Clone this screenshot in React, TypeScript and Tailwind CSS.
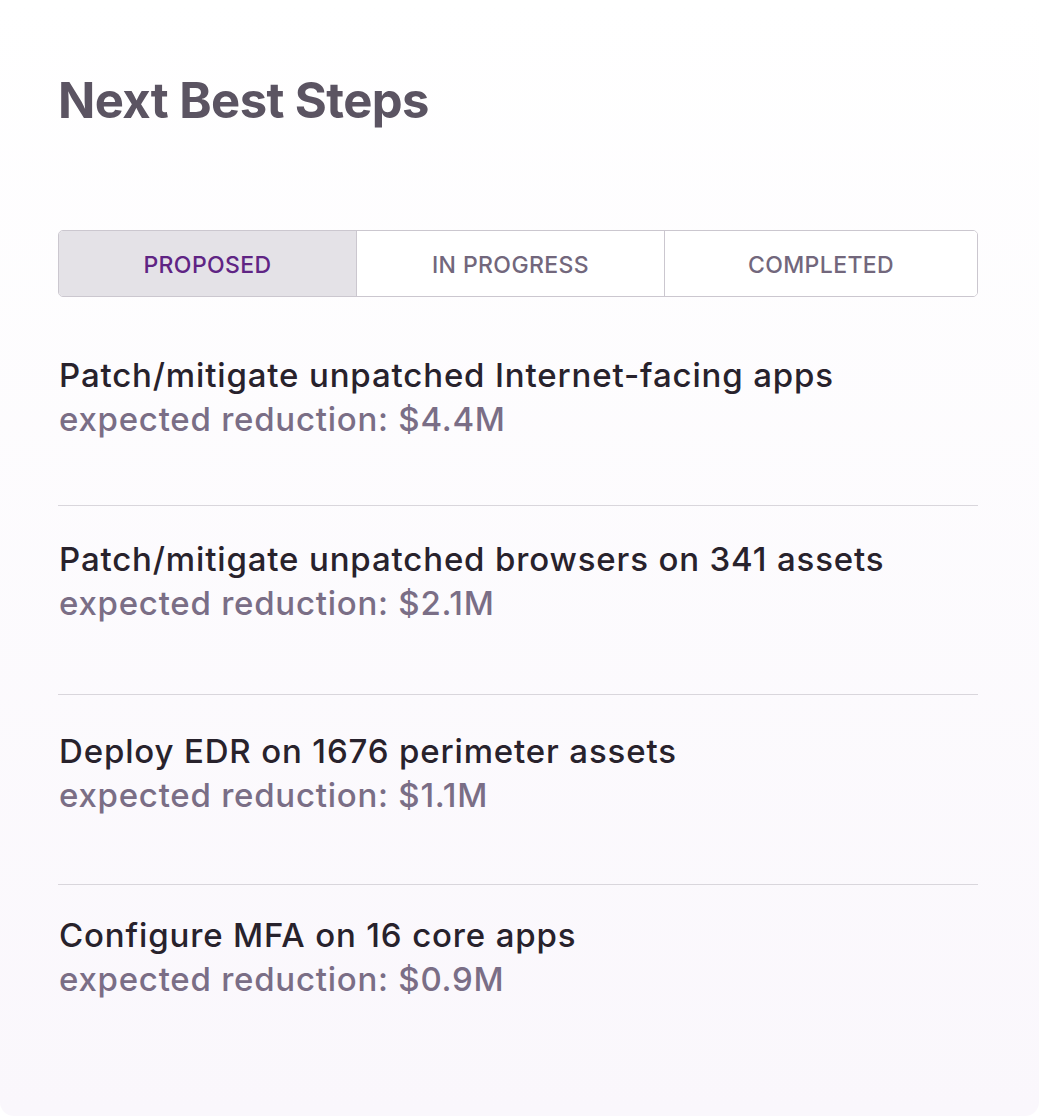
import React from "react";

const items = [
  { title: "Patch/mitigate unpatched Internet-facing apps", value: "$4.4M", cls: "pb-[64px] border-b border-[#d9d6dc]" },
  { title: "Patch/mitigate unpatched browsers on 341 assets", value: "$2.1M", cls: "pt-[31px] pb-[69px] border-b border-[#d9d6dc]" },
  { title: "Deploy EDR on 1676 perimeter assets", value: "$1.1M", cls: "pt-[34px] pb-[67px] border-b border-[#d9d6dc]" },
  { title: "Configure MFA on 16 core apps", value: "$0.9M", cls: "pt-[28px]" },
];

export default function App() {
  return (
    <div
      className="w-[1039px] h-[1118px] bg-white"
      style={{ fontFamily: "Inter, 'Noto Sans', sans-serif" }}
    >
      <div className="h-[1116px] rounded-b-[14px] bg-gradient-to-b from-[#ffffff] to-[#faf7fc] px-[58px] pt-[71px]">
        <h1 className="text-[49px] leading-[59px] font-bold text-[#5b5462] tracking-[-0.6px]">
          Next Best Steps
        </h1>
        <div className="mt-[100px] grid grid-cols-[298px_308px_1fr] h-[67px] w-[920px] rounded-[5px] border border-[#cbc7cf] overflow-hidden">
          <div className="flex items-center justify-center pt-[4px] bg-[#e4e2e7] border-r border-[#cbc7cf] text-[23px] tracking-[0.4px] font-medium text-[#5f2484]">
            PROPOSED
          </div>
          <div className="flex items-center justify-center pt-[4px] bg-white border-r border-[#cbc7cf] text-[23px] tracking-[0.4px] font-medium text-[#72677c]">
            IN PROGRESS
          </div>
          <div className="flex items-center justify-center pt-[4px] bg-white text-[23px] tracking-[0.4px] font-medium text-[#72677c]">
            COMPLETED
          </div>
        </div>
        <div className="mt-[56px] w-[920px]">
          {items.map((it, i) => (
            <div key={i} className={it.cls}>
              <div className="text-[33px] leading-[44px] font-medium tracking-[0.85px] text-[#28222c] pl-[1px]">
                {it.title}
              </div>
              <div className="text-[33px] leading-[44px] font-medium tracking-[0.75px] text-[#7a6e86] pl-[1px]">
                expected reduction: {it.value}
              </div>
            </div>
          ))}
        </div>
      </div>
    </div>
  );
}
